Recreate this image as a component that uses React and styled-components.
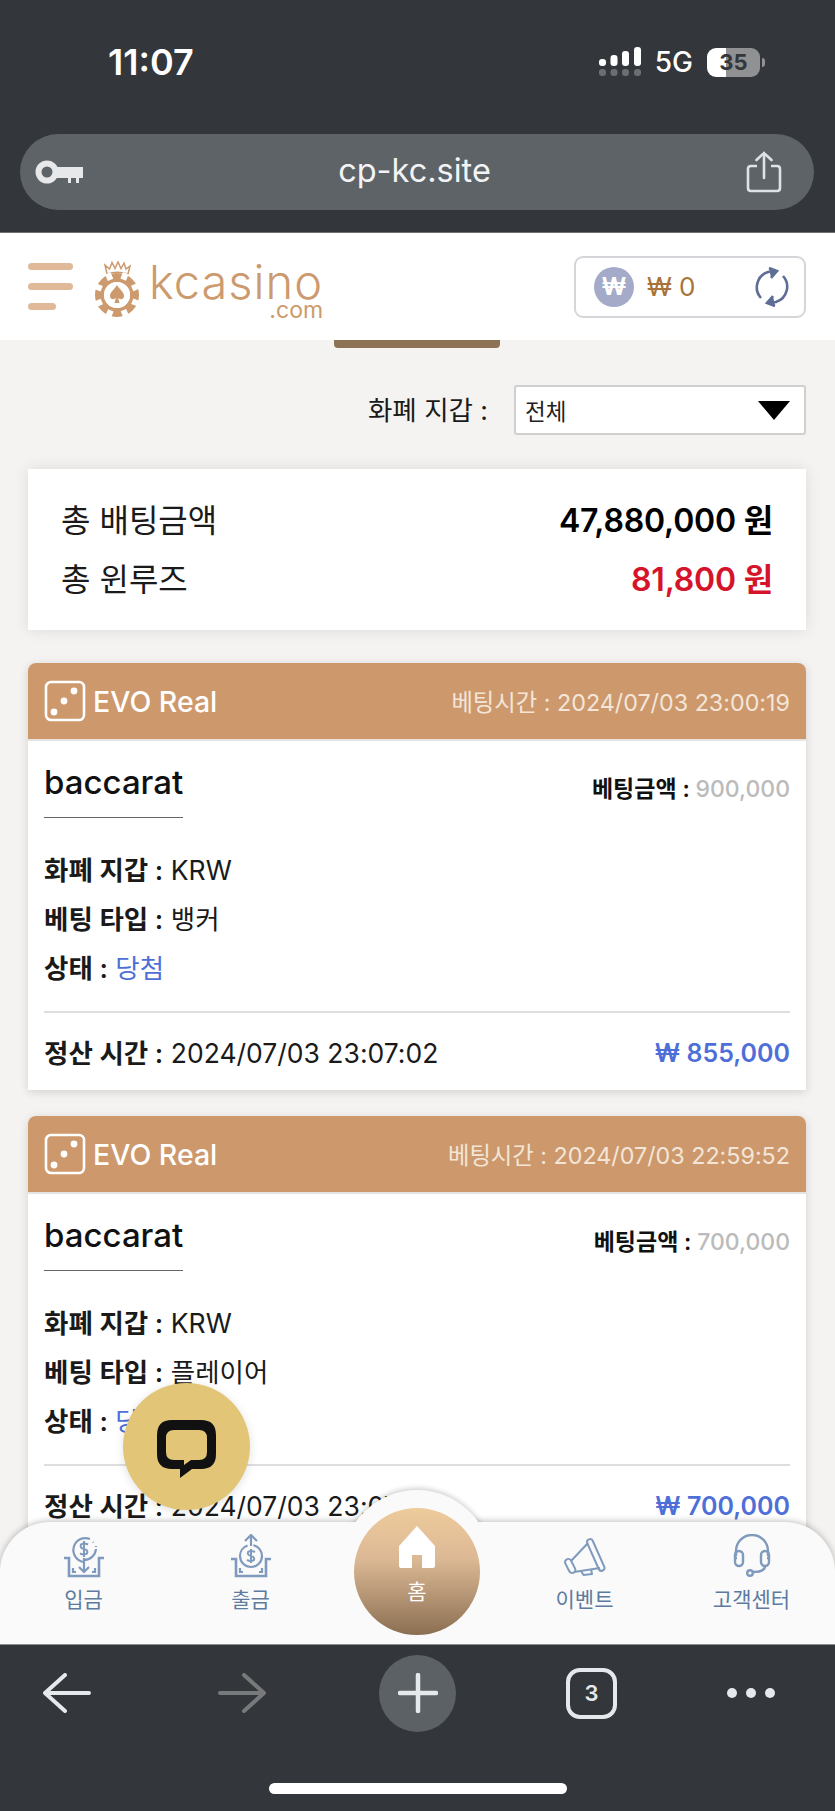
import React from 'react';
import styled, { createGlobalStyle } from 'styled-components';

const FONT = `Inter, "Noto Sans CJK KR", "Noto Sans", sans-serif`;

const GlobalStyle = createGlobalStyle`
    html, body {
        margin: 0;
        padding: 0;
        background: #33363a;
    }
    * {
        box-sizing: border-box;
    }
`;

const bets = [
    { time: '2024/07/03 23:00:19', amount: '900,000', type: '뱅커', settled: '2024/07/03 23:07:02', win: '₩ 855,000' },
    { time: '2024/07/03 22:59:52', amount: '700,000', type: '플레이어', settled: '2024/07/03 23:07:02', win: '₩ 700,000' },
];

function Dice() {
    return (
        <svg width="42" height="42" viewBox="0 0 42 42">
            <rect x="2" y="2" width="38" height="38" rx="5" fill="none" stroke="#fff" strokeWidth="2.6" />
            <circle cx="30" cy="11" r="3.4" fill="#fff" />
            <circle cx="20" cy="21" r="3.4" fill="#fff" />
            <circle cx="10" cy="32" r="3.4" fill="#fff" />
        </svg>
    );
}

function Chip() {
    const notches = [0, 45, 90, 135, 180, 225, 270, 315];
    return (
        <svg width="46" height="56" viewBox="0 0 46 56">
            <path d="M13 13 L11 4 L15.5 8 L18 1.5 L21 7.5 L24 1 L27 7.5 L30 2 L32 8 L36 5 L34 13 Q23 9.5 13 13Z" fill="none" stroke="#cc9a6d" strokeWidth="1.5" />
            <circle cx="23" cy="34" r="17.5" fill="none" stroke="#cc9a6d" strokeWidth="9" />
            {notches.map((a) => (
                <rect key={a} x="20" y="10.5" width="6" height="7" fill="#fff" transform={`rotate(${a + 22} 23 34)`} />
            ))}
            <circle cx="23" cy="34" r="13" fill="#fff" />
            <path d="M23 24 C26 29 30 31 30 35 C30 38.5 25.8 39.2 24 36.8 L25.6 42 H20.4 L22 36.8 C20.2 39.2 16 38.5 16 35 C16 31 20 29 23 24Z" fill="#cc9a6d" />
        </svg>
    );
}

function Deposit() {
    return (
        <svg width="42" height="44" viewBox="0 0 42 44" fill="none" stroke="#7f9abd" strokeWidth="2.2">
            <path d="M21 28 A12 12 0 1 1 27 5" />
            <path d="M30 8 L30.5 8.5 M33 12 V13" strokeWidth="2.4" />
            <path d="M21 26 A12 12 0 0 0 33 15" />
            <path d="M25 10.5 Q21 8.5 18 10.5 Q16.5 14 21 15 Q25.5 16 24 19.5 Q21 21.5 17 19.5 M21 7 V23" strokeWidth="2" />
            <path d="M21 24 V38 M16 33 L21 38 L26 33" />
            <path d="M1 24 H6 V42 H36 V24 H41" strokeWidth="2.6" />
            <path d="M10 34 V38 H13 M32 34 V38 H29" strokeWidth="2.2" />
        </svg>
    );
}

function Withdraw() {
    return (
        <svg width="42" height="44" viewBox="0 0 42 44" fill="none" stroke="#7f9abd" strokeWidth="2.2">
            <path d="M21 1 V12 M15 7 L21 1 L27 7" />
            <circle cx="21" cy="22" r="11" strokeDasharray="48 6" />
            <path d="M25 18 Q21 16 18 18 Q17 21 21 22 Q25 23 24 26 Q21 28 17 26 M21 15 V29" strokeWidth="2" />
            <path d="M1 25 H6 V42 H36 V25 H41" strokeWidth="2.6" />
            <path d="M10 34 V38 H13 M32 34 V38 H29" />
        </svg>
    );
}

function Megaphone() {
    return (
        <svg width="42" height="44" viewBox="0 0 42 44" fill="none" stroke="#7f9abd" strokeWidth="2" strokeLinejoin="round">
            <g transform="translate(0 3)">
                <path d="M24 6 L7 24 M36 31 L10 35" />
                <rect x="28.7" y="1" width="6" height="34" rx="3" transform="rotate(-24 31.7 17.8)" />
                <rect x="3" y="21.5" width="6.4" height="15" rx="3.2" transform="rotate(-27 6.2 29)" />
                <path d="M17 34 L19.5 38 L28 37 L27 32" />
            </g>
        </svg>
    );
}

function Headset() {
    return (
        <svg width="38" height="44" viewBox="0 0 38 44" fill="none" stroke="#7f9abd" strokeWidth="2.4">
            <path d="M3 22 V17 A16 16 0 0 1 35 17 V22" />
            <rect x="2" y="17" width="8" height="15" rx="4" />
            <rect x="28" y="17" width="8" height="15" rx="4" />
            <path d="M4 24 H2 M34 24 H36 M32 32 Q32 38 20 38" />
            <circle cx="17" cy="39" r="2.8" />
        </svg>
    );
}

function App() {
    return (
        <>
            <GlobalStyle />
            <Phone>
                <StatusBar>
                    <Clock>11:07</Clock>
                    <StatusRight>
                        <svg width="42" height="30" viewBox="0 0 42 30">
                            <rect x="0" y="12" width="7" height="7" rx="3" fill="#fff" />
                            <rect x="11.500" y="8" width="7" height="11" rx="3" fill="#fff" />
                            <rect x="23" y="4" width="7" height="15" rx="3" fill="#fff" />
                            <rect x="35" y="0" width="7" height="19" rx="3" fill="#fff" />
                            {[0, 11.5, 23, 35].map((x) => (
                                <rect key={x} x={x} y="22" width="7" height="7" rx="3" fill="#6c6f72" />
                            ))}
                        </svg>
                        <Network>5G</Network>
                        <Battery>35</Battery>
                        <BatteryTip />
                    </StatusRight>
                </StatusBar>

                <AddressRow>
                    <AddressPill>
                        <svg width="48" height="24" viewBox="0 0 48 24">
                            <circle cx="12" cy="12" r="8.500" fill="none" stroke="#e6e8ea" strokeWidth="6" />
                            <path d="M21 7 H48 V18 H44 V23 H41 V18 H36 V23 H33 V18 H21Z" fill="#e6e8ea" />
                        </svg>
                        <Url>cp-kc.site</Url>
                        <svg width="36" height="42" viewBox="0 0 36 42" fill="none" stroke="#dfe2e4" strokeWidth="2.6">
                            <path d="M11 15 H5 Q2 15 2 18 V37 Q2 40 5 40 H31 Q34 40 34 37 V18 Q34 15 31 15 H25" />
                            <path d="M18 27 V2 M10.500 9 L18 2 L25.500 9" strokeLinecap="round" />
                        </svg>
                    </AddressPill>
                </AddressRow>

                <Header>
                    <HeaderLeft>
                        <Burger>
                            <BurgerBar />
                            <BurgerBar />
                            <BurgerBar $short />
                        </Burger>
                        <Logo>
                            <Chip />
                            <LogoText>
                                <LogoName>kcasino</LogoName>
                                <LogoCom>.com</LogoCom>
                            </LogoText>
                        </Logo>
                    </HeaderLeft>
                    <Wallet>
                        <WonBadge>₩</WonBadge>
                        <Balance>₩ 0</Balance>
                        <svg width="36" height="40" viewBox="0 0 36 40" fill="none" stroke="#5f6d96" strokeWidth="2.600">
                            <path d="M7 31 A16 16 0 0 1 14 5 L22 4" />
                            <path d="M15 1 L23 4 L17 11" fill="#5f6d96" />
                            <path d="M29 9 A16 16 0 0 1 22 35 L14 36" />
                            <path d="M21 39 L13 36 L19 29" fill="#5f6d96" />
                        </svg>
                    </Wallet>
                </Header>

                <Screen>
                    <Content>
                        <TabStub />
                        <FilterRow>
                            <FilterLabel>화폐 지갑 :</FilterLabel>
                            <Select>
                                <span>전체</span>
                                <Caret />
                            </Select>
                        </FilterRow>

                        <Summary>
                            <SummaryRow>
                                <SummaryLabel>총 배팅금액</SummaryLabel>
                                <SummaryValue>47,880,000 원</SummaryValue>
                            </SummaryRow>
                            <SummaryRow>
                                <SummaryLabel>총 윈루즈</SummaryLabel>
                                <SummaryValue $red>81,800 원</SummaryValue>
                            </SummaryRow>
                        </Summary>

                        {bets.map((bet) => (
                            <BetCard key={bet.time}>
                                <BetHeader>
                                    <BetVendor>
                                        <Dice />
                                        <span>EVO Real</span>
                                    </BetVendor>
                                    <BetTime>베팅시간 : {bet.time}</BetTime>
                                </BetHeader>
                                <BetBody>
                                    <BetTop>
                                        <GameName>baccarat</GameName>
                                        <BetAmount>
                                            베팅금액 : <Muted>{bet.amount}</Muted>
                                        </BetAmount>
                                    </BetTop>
                                    <Info>
                                        <InfoLine><b>화폐 지갑 :</b> KRW</InfoLine>
                                        <InfoLine><b>베팅 타입 :</b> {bet.type}</InfoLine>
                                        <InfoLine><b>상태 :</b> <Won>당첨</Won></InfoLine>
                                    </Info>
                                </BetBody>
                                <BetFooter>
                                    <InfoLine><b>정산 시간 :</b> {bet.settled}</InfoLine>
                                    <Payout>{bet.win}</Payout>
                                </BetFooter>
                            </BetCard>
                        ))}
                    </Content>

                    <ChatButton>
                        <svg width="59" height="58" viewBox="0 0 59 58">
                            <path d="M15 0 H44 Q59 0 59 15 V34 Q59 49 44 49 H35 L23 58 V49 H15 Q0 49 0 34 V15 Q0 0 15 0Z M17 10 Q9 10 9 18 V32 Q9 40 17 40 H27 V45 L34 40 H42 Q50 40 50 32 V18 Q50 10 42 10Z" fill="#111" fillRule="evenodd" />
                        </svg>
                    </ChatButton>

                    <BottomNav>
                        <Bump />
                        <NavItem>
                            <Deposit />
                            <NavLabel>입금</NavLabel>
                        </NavItem>
                        <NavItem>
                            <Withdraw />
                            <NavLabel>출금</NavLabel>
                        </NavItem>
                        <HomeItem>
                            <HomeCircle>
                                <svg width="38" height="42" viewBox="0 0 38 42">
                                    <path d="M19 0 L37 20 V40 Q37 42 35 42 H24 V29 H14 V42 H3 Q1 42 1 40 V20Z" fill="#fff" />
                                </svg>
                                <HomeLabel>홈</HomeLabel>
                            </HomeCircle>
                        </HomeItem>
                        <NavItem>
                            <Megaphone />
                            <NavLabel>이벤트</NavLabel>
                        </NavItem>
                        <NavItem>
                            <Headset />
                            <NavLabel>고객센터</NavLabel>
                        </NavItem>
                    </BottomNav>
                </Screen>

                <BrowserBar>
                    <BrowserTools>
                        <svg width="48" height="40" viewBox="0 0 48 40" fill="none" stroke="#e6e9ec" strokeWidth="4" strokeLinecap="round" strokeLinejoin="round">
                            <path d="M46 20 H3 M22 2 L2 20 L22 38" />
                        </svg>
                        <svg width="48" height="40" viewBox="0 0 48 40" fill="none" stroke="#78797b" strokeWidth="4" strokeLinecap="round" strokeLinejoin="round">
                            <path d="M2 20 H45 M26 2 L46 20 L26 38" />
                        </svg>
                        <PlusCircle>
                            <svg width="40" height="40" viewBox="0 0 40 40" stroke="#e6e9ec" strokeWidth="4.500" strokeLinecap="round">
                                <path d="M20 2 V38 M2 20 H38" />
                            </svg>
                        </PlusCircle>
                        <TabsCount>3</TabsCount>
                        <Dots>
                            <Dot />
                            <Dot />
                            <Dot />
                        </Dots>
                    </BrowserTools>
                    <HomeIndicator />
                </BrowserBar>
            </Phone>
        </>
    );
}

const Phone = styled.div`
    width: 835px;
    height: 1811px;
    display: flex;
    flex-direction: column;
    overflow: hidden;
    background: #33363a;
    font-family: ${FONT};
`;

const StatusBar = styled.div`
    height: 134px;
    padding: 40px 70px 0 108px;
    display: flex;
    justify-content: space-between;
    align-items: flex-start;
    color: #fff;
`;

const Clock = styled.div`
    font-size: 36px;
    font-weight: 600;
    line-height: 44px;
`;

const StatusRight = styled.div`
    display: flex;
    align-items: center;
    height: 44px;
`;

const Network = styled.div`
    font-size: 28px;
    font-weight: 500;
    margin: 0 14px 0 14px;
`;

const Battery = styled.div`
    width: 53px;
    height: 29px;
    border-radius: 9px;
    background: linear-gradient(90deg, #fff 35%, #8f9193 35%);
    color: #33363a;
    font-size: 22px;
    font-weight: 700;
    line-height: 29px;
    text-align: center;
`;

const BatteryTip = styled.div`
    width: 3px;
    height: 9px;
    margin-left: 2px;
    border-radius: 0 3px 3px 0;
    background: #8f9193;
`;

const AddressRow = styled.div`
    height: 99px;
    padding: 0 21px 0 20px;
    border-bottom: 1px solid #6e7072;
`;

const AddressPill = styled.div`
    height: 76px;
    border-radius: 38px;
    background: #5e6367;
    padding: 0 32px 0 15px;
    display: flex;
    align-items: center;
    justify-content: space-between;
`;

const Url = styled.div`
    margin: 0 0 4px 0;
    color: #f2f3f4;
    font-size: 32.500px;
    font-weight: 400;
`;

const Header = styled.header`
    height: 107px;
    padding: 0 29px 0 28px;
    background: #fff;
    display: flex;
    align-items: center;
    justify-content: space-between;
`;

const HeaderLeft = styled.div`
    display: flex;
    align-items: center;
    gap: 21px;
`;

const Burger = styled.div`
    width: 45px;
    display: flex;
    flex-direction: column;
    gap: 13px;
`;

const BurgerBar = styled.div`
    height: 7px;
    width: ${(p) => (p.$short ? '28px' : '45px')};
    border-radius: 4px;
    background: #e0b998;
`;

const Logo = styled.div`
    display: flex;
    align-items: flex-end;
    gap: 9px;
    margin-top: 4px;
`;

const LogoText = styled.div`
    display: flex;
    flex-direction: column;
    align-items: flex-end;
    color: #cc9a6d;
`;

const LogoName = styled.div`
    font-size: 47px;
    font-weight: 300;
    line-height: 42px;
    letter-spacing: 1px;
`;

const LogoCom = styled.div`
    font-size: 23px;
    font-weight: 400;
    line-height: 14px;
`;

const Wallet = styled.div`
    width: 232px;
    height: 62px;
    border: 2px solid #d6d6da;
    border-radius: 9px;
    padding: 0 14px 0 18px;
    display: flex;
    align-items: center;
`;

const WonBadge = styled.div`
    width: 40px;
    height: 40px;
    border-radius: 50%;
    background: #a5aac8;
    color: #fff;
    font-size: 24px;
    font-weight: 700;
    line-height: 40px;
    text-align: center;
`;

const Balance = styled.div`
    flex: 1;
    margin-left: 13px;
    color: #a8733a;
    font-size: 26px;
    font-weight: 400;
`;

const Screen = styled.main`
    position: relative;
    flex: 1;
    overflow: hidden;
    background: #f4f3f1;
`;

const Content = styled.div`
    padding: 0 29px 0 28px;
    display: flex;
    flex-direction: column;
`;

const TabStub = styled.div`
    width: 166px;
    height: 8px;
    margin: 0 auto;
    border-radius: 0 0 4px 4px;
    background: #8e7256;
`;

const FilterRow = styled.div`
    margin-top: 37px;
    display: flex;
    align-items: center;
    justify-content: flex-end;
    gap: 26px;
`;

const FilterLabel = styled.div`
    margin-bottom: 3px;
    color: #1a1a1a;
    font-size: 26.5px;
`;

const Select = styled.div`
    width: 292px;
    height: 50px;
    padding: 0 14px 0 9px;
    border: 2px solid #cfcfcf;
    border-radius: 3px;
    background: #fff;
    color: #222;
    font-size: 22.5px;
    display: flex;
    align-items: center;
    justify-content: space-between;
`;

const Caret = styled.div`
    width: 0;
    height: 0;
    border-left: 16px solid transparent;
    border-right: 16px solid transparent;
    border-top: 19px solid #000;
`;

const Summary = styled.section`
    margin-top: 34px;
    height: 161px;
    padding: 29px 33px 0 33px;
    background: #fff;
    box-shadow: 0 0 14px rgba(0, 0, 0, 0.1);
    display: flex;
    flex-direction: column;
    gap: 19px;
`;

const SummaryRow = styled.div`
    height: 40px;
    display: flex;
    align-items: center;
    justify-content: space-between;
`;

const SummaryLabel = styled.div`
    color: #1a1a1a;
    font-size: 32px;
`;

const SummaryValue = styled.div`
    color: ${(p) => (p.$red ? '#d5142b' : '#000')};
    font-size: 32px;
    font-weight: 600;
    letter-spacing: -0.2px;
`;

const BetCard = styled.article`
    margin-top: 33px;
    height: 427px;
    border-radius: 8px 8px 0 0;
    background: #fff;
    box-shadow: 0 2px 10px rgba(0, 0, 0, 0.14);
    display: flex;
    flex-direction: column;

    & + & {
        margin-top: 26px;
    }
`;

const BetHeader = styled.div`
    height: 78px;
    padding: 0 16px;
    border-radius: 8px 8px 0 0;
    border-bottom: 2px solid #e6e4e2;
    background: #cc986c;
    display: flex;
    align-items: center;
    justify-content: space-between;
    color: #fff;
`;

const BetVendor = styled.div`
    display: flex;
    align-items: center;
    gap: 7px;
    font-size: 28.5px;
    font-weight: 500;
`;

const BetTime = styled.div`
    color: #f3e6d9;
    font-size: 23.300px;
`;

const BetBody = styled.div`
    flex: 1;
    padding: 19px 16px 0;
`;

const BetTop = styled.div`
    display: flex;
    align-items: flex-start;
    justify-content: space-between;
`;

const GameName = styled.div`
    padding-bottom: 13px;
    border-bottom: 1px solid #666;
    color: #111;
    font-size: 33px;
    font-weight: 500;
    line-height: 44px;
`;

const BetAmount = styled.div`
    margin-top: 10px;
    color: #111;
    font-size: 23px;
    font-weight: 600;
`;

const Muted = styled.span`
    color: #bbb;
    font-weight: 500;
`;

const Info = styled.div`
    margin-top: 34px;
    display: flex;
    flex-direction: column;
    gap: 13px;
`;

const InfoLine = styled.div`
    color: #1a1a1a;
    font-size: 26.5px;
    line-height: 36px;

    b {
        font-weight: 600;
    }
`;

const Won = styled.span`
    color: #4f6fd8;
`;

const BetFooter = styled.div`
    height: 79px;
    margin: 0 16px;
    padding-top: 3px;
    border-top: 2px solid #dedede;
    display: flex;
    align-items: center;
    justify-content: space-between;
`;

const Payout = styled.div`
    color: #4f6fd8;
    font-size: 25px;
    font-weight: 600;
`;

const ChatButton = styled.div`
    position: absolute;
    left: 123px;
    top: 1043px;
    width: 127px;
    height: 127px;
    padding-top: 4px;
    border-radius: 50%;
    background: #e3c577;
    box-shadow: 0 2px 10px rgba(0, 0, 0, 0.12);
    display: flex;
    align-items: center;
    justify-content: center;
`;

const BottomNav = styled.nav`
    position: absolute;
    left: 0;
    right: 0;
    bottom: 0;
    height: 122px;
    padding-top: 12px;
    border-radius: 50px 50px 0 0;
    background: #fafafa;
    box-shadow: 0 -1px 6px rgba(0, 0, 0, 0.25);
    display: grid;
    grid-template-columns: repeat(5, 1fr);
`;

const Bump = styled.div`
    position: absolute;
    left: 342px;
    top: -32px;
    width: 150px;
    height: 150px;
    border-radius: 50%;
    background: #fafafa;
    box-shadow: 0 -2px 5px rgba(0, 0, 0, 0.18);
    clip-path: inset(-10px -10px 118px -10px);
`;

const NavItem = styled.div`
    display: flex;
    flex-direction: column;
    align-items: center;
    gap: 8px;
    z-index: 1;
`;

const NavLabel = styled.div`
    color: #5d7ba0;
    font-size: 21px;
    line-height: 28px;
`;

const HomeItem = styled.div`
    position: relative;
`;

const HomeCircle = styled.div`
    position: absolute;
    left: 20px;
    top: -26px;
    width: 126px;
    height: 127px;
    padding-top: 18px;
    border-radius: 50%;
    background: linear-gradient(180deg, #eecb9b 0%, #dcb995 40%, #8b6f52 100%);
    display: flex;
    flex-direction: column;
    align-items: center;
    gap: 10px;
`;

const HomeLabel = styled.div`
    color: #fff;
    font-size: 21px;
    line-height: 28px;
`;

const BrowserBar = styled.div`
    height: 167px;
    border-top: 1px solid #8a8b8b;
    background: #33363a;
`;

const BrowserTools = styled.div`
    height: 96px;
    display: grid;
    grid-template-columns: 133px 217px 135px 213px 106px;
    align-items: center;
    justify-items: center;
`;

const PlusCircle = styled.div`
    width: 77px;
    height: 77px;
    border-radius: 50%;
    background: #5c6165;
    display: flex;
    align-items: center;
    justify-content: center;
`;

const TabsCount = styled.div`
    width: 51px;
    height: 51px;
    border: 4px solid #e6e9ec;
    border-radius: 14px;
    color: #e6e9ec;
    font-size: 22px;
    font-weight: 600;
    line-height: 43px;
    text-align: center;
`;

const Dots = styled.div`
    display: flex;
    gap: 9px;
`;

const Dot = styled.div`
    width: 10px;
    height: 10px;
    border-radius: 50%;
    background: #e6e9ec;
`;

const HomeIndicator = styled.div`
    width: 298px;
    height: 11px;
    margin: 42px auto 0;
    border-radius: 6px;
    background: #fff;
`;

export default App;
